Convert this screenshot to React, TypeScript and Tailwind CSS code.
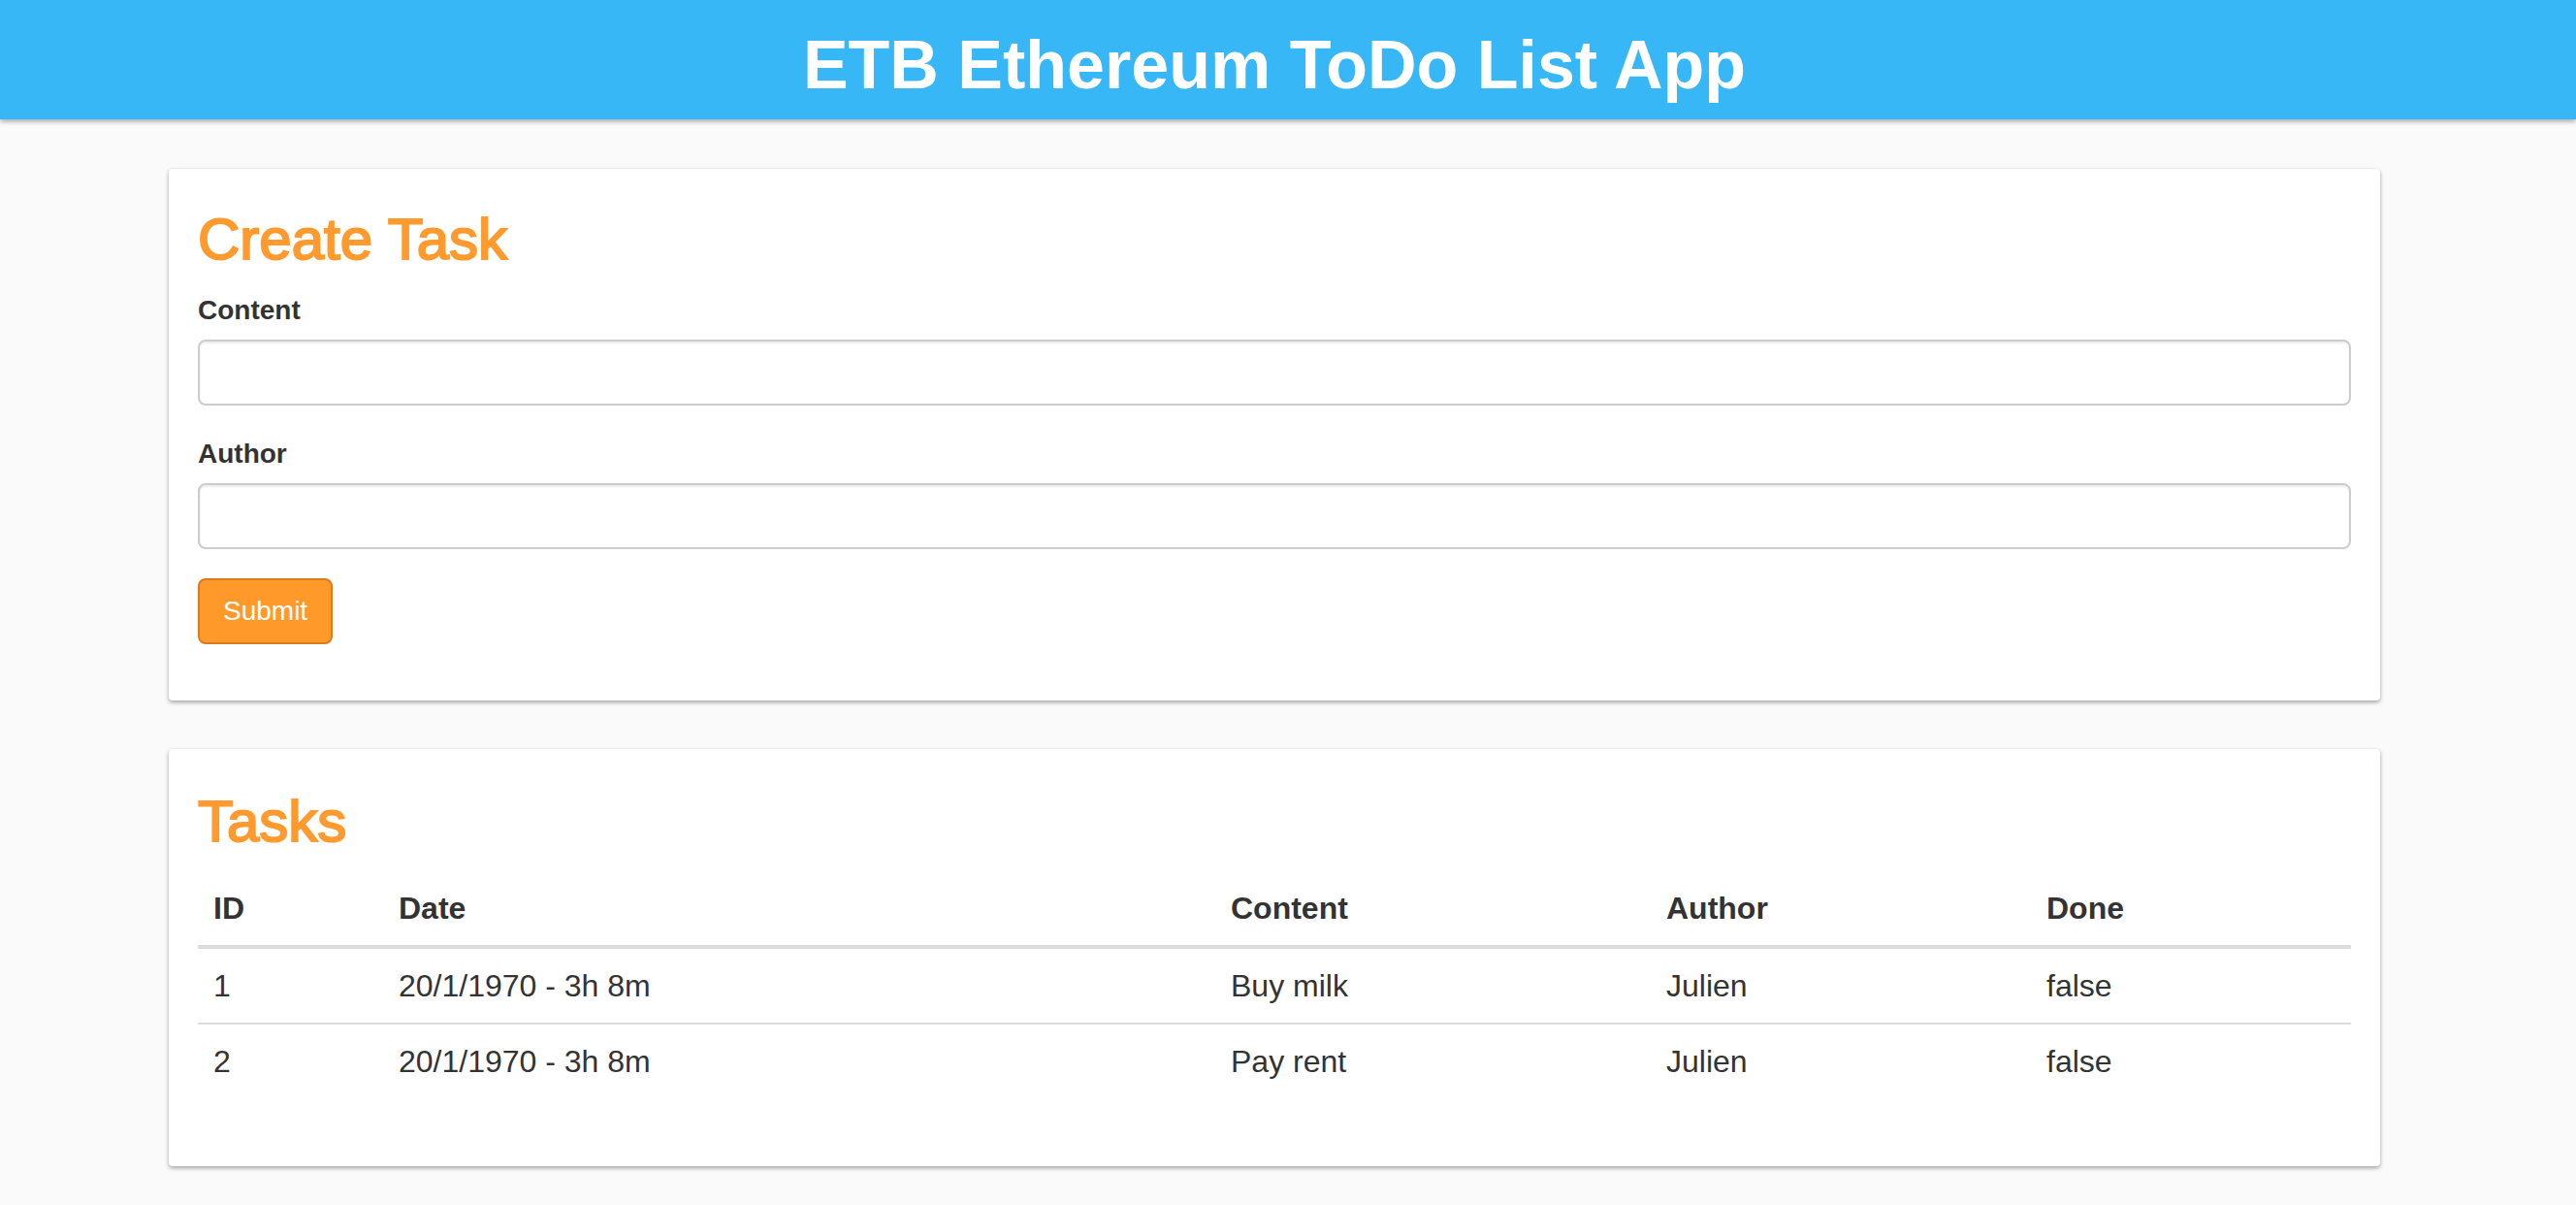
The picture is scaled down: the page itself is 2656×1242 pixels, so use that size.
import { useState } from "react";

type Task = {
  id: number;
  date: string;
  content: string;
  author: string;
  done: boolean;
};

const initialTasks: Task[] = [
  { id: 1, date: "20/1/1970 - 3h 8m", content: "Buy milk", author: "Julien", done: false },
  { id: 2, date: "20/1/1970 - 3h 8m", content: "Pay rent", author: "Julien", done: false },
];

export default function App() {
  const [tasks] = useState<Task[]>(initialTasks);
  const [content, setContent] = useState("");
  const [author, setAuthor] = useState("");

  return (
    <div className="min-h-screen bg-[#fafafa] font-['Liberation_Sans',Arial,Helvetica,sans-serif] text-[#333]">
      {/* Header bar */}
      <header className="h-[123px] bg-[#37b7f5] shadow-[0_2px_5px_rgba(0,0,0,0.35)] relative z-10">
        <div className="w-[2628px] pt-[29px] text-center">
          <h1 className="text-[70px] leading-[77px] font-bold text-white">
            ETB Ethereum ToDo List App
          </h1>
        </div>
      </header>

      <main className="w-[2628px] px-[174px] pt-[51px] pb-[40px] flex flex-col gap-[50px]">
        {/* Create task card */}
        <section className="bg-white rounded-[4px] shadow-[0_2px_4px_rgba(0,0,0,0.35),0_0_2px_rgba(0,0,0,0.06)] pt-[40px] px-[30px] pb-[58px]">
          <h2 className="text-[60px] leading-[66px] text-[#ff9a2e] [-webkit-text-stroke:2px_#ff9a2e] mb-[20px]">
            Create Task
          </h2>
          <form onSubmit={(e) => e.preventDefault()}>
            <div className="mb-[30px]">
              <label className="block text-[28px] leading-[40px] font-bold mb-[10px]">Content</label>
              <input
                value={content}
                onChange={(e) => setContent(e.target.value)}
                className="block w-full h-[68px] px-[24px] text-[28px] border-2 border-[#ccc] rounded-[8px] bg-white shadow-[inset_0_2px_2px_rgba(0,0,0,0.075)] outline-none"
              />
            </div>
            <div className="mb-[30px]">
              <label className="block text-[28px] leading-[40px] font-bold mb-[10px]">Author</label>
              <input
                value={author}
                onChange={(e) => setAuthor(e.target.value)}
                className="block w-full h-[68px] px-[24px] text-[28px] border-2 border-[#ccc] rounded-[8px] bg-white shadow-[inset_0_2px_2px_rgba(0,0,0,0.075)] outline-none"
              />
            </div>
            <button
              type="submit"
              className="h-[68px] px-[24px] text-[28px] leading-[40px] text-white bg-[#ff9a2a] border-2 border-[#d97b20] rounded-[8px]"
            >
              Submit
            </button>
          </form>
        </section>

        {/* Tasks card */}
        <section className="bg-white rounded-[4px] shadow-[0_2px_4px_rgba(0,0,0,0.35),0_0_2px_rgba(0,0,0,0.06)] pt-[42px] px-[30px] pb-[70px]">
          <h2 className="text-[60px] leading-[66px] text-[#ff9a2e] [-webkit-text-stroke:2px_#ff9a2e] mb-[18px]">
            Tasks
          </h2>
          <table className="w-full table-fixed text-[32px] leading-[44px] text-left">
            <colgroup>
              <col className="w-[191px]" />
              <col className="w-[858px]" />
              <col className="w-[449px]" />
              <col className="w-[392px]" />
              <col className="w-[330px]" />
            </colgroup>
            <thead>
              <tr>
                <th className="px-[16px] py-[16px] font-bold border-b-4 border-[#ddd]">ID</th>
                <th className="px-[16px] py-[16px] font-bold border-b-4 border-[#ddd]">Date</th>
                <th className="px-[16px] py-[16px] font-bold border-b-4 border-[#ddd]">Content</th>
                <th className="px-[16px] py-[16px] font-bold border-b-4 border-[#ddd]">Author</th>
                <th className="px-[16px] py-[16px] font-bold border-b-4 border-[#ddd]">Done</th>
              </tr>
            </thead>
            <tbody>
              {tasks.map((task, i) => (
                <tr key={task.id} className={i > 0 ? "border-t-2 border-[#ddd]" : ""}>
                  <td className="px-[16px] py-[16px]">{task.id}</td>
                  <td className="px-[16px] py-[16px]">{task.date}</td>
                  <td className="px-[16px] py-[16px]">{task.content}</td>
                  <td className="px-[16px] py-[16px]">{task.author}</td>
                  <td className="px-[16px] py-[16px]">{task.done.toString()}</td>
                </tr>
              ))}
            </tbody>
          </table>
        </section>
      </main>
    </div>
  );
}
